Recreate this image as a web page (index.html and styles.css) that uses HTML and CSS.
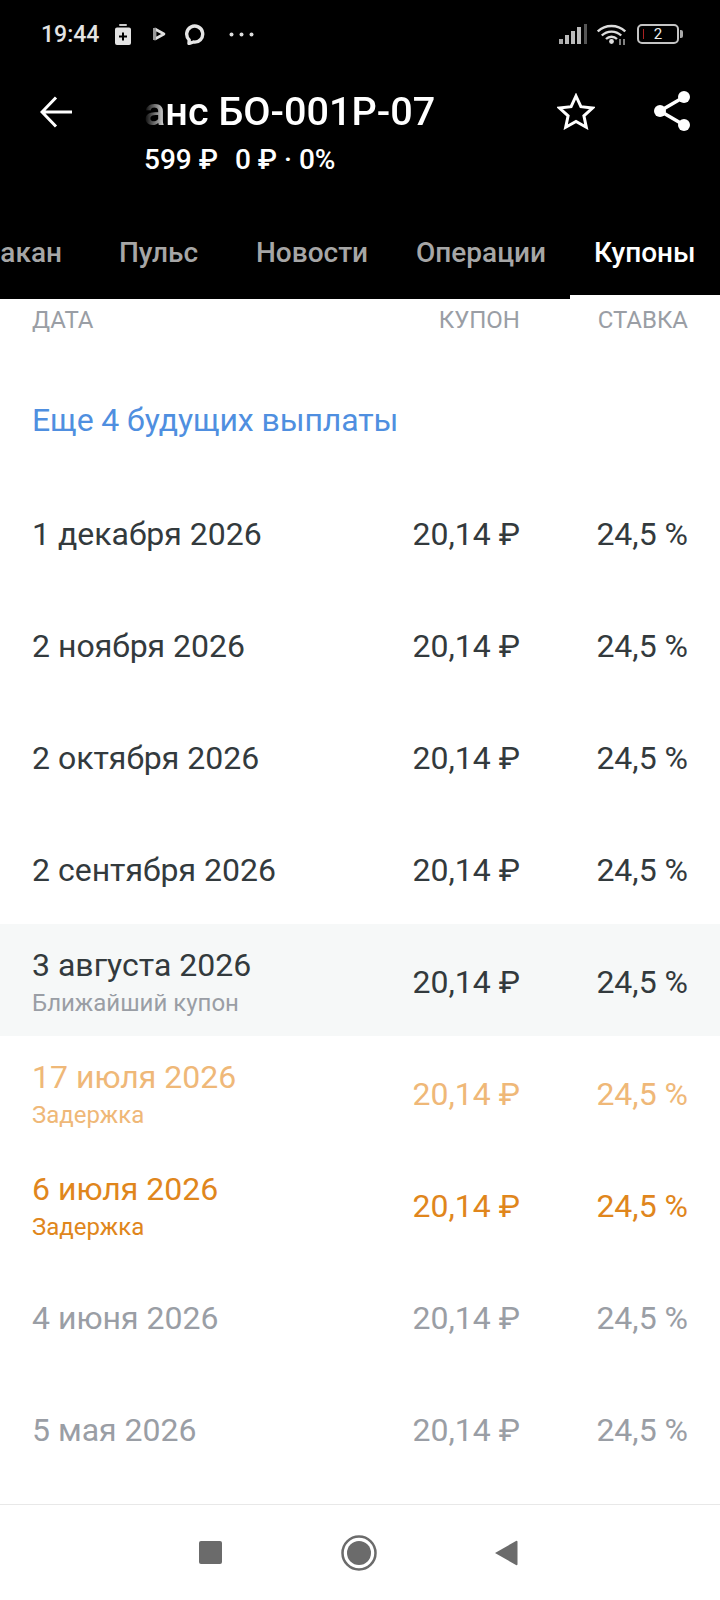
FILE: index.html
```html
<!DOCTYPE html>
<html lang="ru">

<head>
  <meta charset="utf-8" />
  <title>Купоны</title>
  <link rel="stylesheet" href="styles.css">
</head>

<body>
  <div class="screen">
    <header class="top">
      <div class="status">
        <span class="time">19:44</span>
        <svg class="st-clip" width="16" height="21" viewBox="0 0 16 21">
          <rect x="4" y="0" width="8" height="2" rx="1" fill="#ccc" />
          <path d="M2 3.500h12a2 2 0 0 1 2 2V19a2 2 0 0 1-2 2H2a2 2 0 0 1-2-2V5.500a2 2 0 0 1 2-2z" fill="#e4e4e4" />
          <path d="M8 8.500v8M4 12.500h8" stroke="#000" stroke-width="2" />
        </svg>
        <svg class="st-play" width="13" height="14" viewBox="0 0 13 14">
          <path d="M2 2l9 5-9 5z" fill="none" stroke="#e0e0e0" stroke-width="2.600" stroke-linejoin="round" />
          <path d="M1.500 1v12" stroke="#999" stroke-width="3" />
        </svg>
        <svg class="st-chat" width="21" height="21" viewBox="0 0 20 21">
          <path d="M4.500 19.500l.2-3.600A8 8 0 1 1 9 18z" fill="none" stroke="#e6e6e6" stroke-width="3.400" stroke-linejoin="round" />
        </svg>
        <svg class="st-dots" width="25" height="5" viewBox="0 0 25 5">
          <circle cx="2.500" cy="2.500" r="2" fill="#ddd" />
          <circle cx="12.500" cy="2.500" r="2" fill="#ddd" />
          <circle cx="22.500" cy="2.500" r="2" fill="#ddd" />
        </svg>
        <span class="status-gap"></span>
        <svg class="st-signal" width="28" height="20" viewBox="0 0 28 20">
          <rect x="0" y="15" width="4" height="5" fill="#aaa" />
          <rect x="6" y="11" width="4" height="9" fill="#bbb" />
          <rect x="12" y="7" width="4" height="13" fill="#bbb" />
          <rect x="18" y="3" width="4" height="17" fill="#bbb" />
          <rect x="25" y="0" width="3" height="20" fill="#555" />
        </svg>
        <svg class="st-wifi" width="29" height="22" viewBox="0 0 29 22">
          <path d="M.8 8.500a20 20 0 0 1 27.400 0M4.800 12.500a14 14 0 0 1 19.400 0M9 16a8 8 0 0 1 11 0" fill="none" stroke="#ddd" stroke-width="2.400" />
          <circle cx="14.500" cy="18.500" r="2.400" fill="#ddd" />
          <path d="M23 16v6M27 16v6" stroke="#aaa" stroke-width="1.500" />
        </svg>
        <div class="st-battery">
          <div class="bat-body"><i class="bat-level"></i><span>2</span></div>
          <i class="bat-tip"></i>
        </div>
      </div>

      <div class="toolbar">
        <svg class="back" width="32" height="32" viewBox="0 0 32 32">
          <path d="M32 16H3M16 1.500L2 16l14 14.500" fill="none" stroke="#fff" stroke-width="3" />
        </svg>
        <div class="heading">
          <div class="title">анс БО-001Р-07</div>
          <div class="sub">599 ₽<span class="sub-change">0 ₽ · 0%</span></div>
        </div>
        <svg class="star" width="38" height="37" viewBox="0 0 38 37">
          <path d="M19 3l4.900 10.700 11.600 1.300-8.600 7.800 2.400 11.400L19 28.500 8.700 34.200l2.400-11.400L2.500 15l11.600-1.300z" fill="none" stroke="#fff" stroke-width="3" />
        </svg>
        <svg class="share" width="36" height="40" viewBox="0 0 36 40">
          <path d="M30 6L6 20l24 14" fill="none" stroke="#fff" stroke-width="3.500" />
          <circle cx="30" cy="6" r="6" fill="#fff" />
          <circle cx="6" cy="20" r="6" fill="#fff" />
          <circle cx="30" cy="34" r="6" fill="#fff" />
        </svg>
      </div>

      <nav class="tabs">
        <a class="tab tab-cut">акан</a>
        <a class="tab">Пульс</a>
        <a class="tab">Новости</a>
        <a class="tab">Операции</a>
        <a class="tab active">Купоны</a>
      </nav>
    </header>

    <main class="list">
      <div class="row head">
        <span>ДАТА</span>
        <span class="num">КУПОН</span>
        <span class="num">СТАВКА</span>
      </div>

      <div class="row link-row"><a>Еще 4 будущих выплаты</a></div>

      <div class="row">
        <span>1 декабря 2026</span>
        <span class="num">20,14 ₽</span>
        <span class="num">24,5 %</span>
      </div>
      <div class="row">
        <span>2 ноября 2026</span>
        <span class="num">20,14 ₽</span>
        <span class="num">24,5 %</span>
      </div>
      <div class="row">
        <span>2 октября 2026</span>
        <span class="num">20,14 ₽</span>
        <span class="num">24,5 %</span>
      </div>
      <div class="row">
        <span>2 сентября 2026</span>
        <span class="num">20,14 ₽</span>
        <span class="num">24,5 %</span>
      </div>
      <div class="row next">
        <div>
          <div>3 августа 2026</div>
          <div class="note">Ближайший купон</div>
        </div>
        <span class="num">20,14 ₽</span>
        <span class="num">24,5 %</span>
      </div>
      <div class="row delay-faded">
        <div>
          <div>17 июля 2026</div>
          <div class="note">Задержка</div>
        </div>
        <span class="num">20,14 ₽</span>
        <span class="num">24,5 %</span>
      </div>
      <div class="row delay">
        <div>
          <div>6 июля 2026</div>
          <div class="note">Задержка</div>
        </div>
        <span class="num">20,14 ₽</span>
        <span class="num">24,5 %</span>
      </div>
      <div class="row past">
        <span>4 июня 2026</span>
        <span class="num">20,14 ₽</span>
        <span class="num">24,5 %</span>
      </div>
      <div class="row past">
        <span>5 мая 2026</span>
        <span class="num">20,14 ₽</span>
        <span class="num">24,5 %</span>
      </div>
    </main>

    <footer class="navbar">
      <i class="nav-square"></i>
      <svg class="nav-home" width="36" height="36" viewBox="0 0 36 36">
        <circle cx="18" cy="18" r="16.500" fill="none" stroke="#6b6b6b" stroke-width="2.500" />
        <circle cx="18" cy="18" r="12" fill="#6b6b6b" />
      </svg>
      <svg class="nav-back" width="23" height="26" viewBox="0 0 23 26">
        <path d="M0 13L21 1a1 1 0 0 1 1.500 1v22a1 1 0 0 1-1.500 1z" fill="#6b6b6b" />
      </svg>
    </footer>
  </div>
</body>

</html>
```

FILE: styles.css
```css
* {
  box-sizing: border-box;
}

body {
  margin: 0;
  background-color: #fff;
  font-family: Roboto, "Noto Sans", sans-serif;
}

.screen {
  width: 720px;
  height: 1600px;
  display: flex;
  flex-direction: column;
  overflow: hidden;
}

.top {
  background-color: #000;
  height: 299px;
  flex: none;
}

.status {
  height: 68px;
  display: flex;
  align-items: center;
  padding-left: 41px;
  color: #e4e4e4;
}

.time {
  font-size: 23px;
  font-weight: 500;
  width: 74px;
}

.st-clip {
  margin-right: 22px;
}

.st-play {
  margin-right: 18px;
}

.st-chat {
  margin-right: 24px;
}

.status-gap {
  flex: 1;
}

.st-signal {
  margin-right: 10px;
}

.st-wifi {
  margin-right: 11px;
}

.st-battery {
  display: flex;
  align-items: center;
  margin-right: 37px;
}

.bat-body {
  position: relative;
  width: 42px;
  height: 20px;
  border: 2px solid #c4c4c4;
  border-radius: 5px;
  font-size: 15px;
  line-height: 16px;
  text-align: center;
  color: #eee;
}

.bat-level {
  position: absolute;
  left: 4px;
  top: 3px;
  width: 1px;
  height: 10px;
  background-color: #a22;
}

.bat-tip {
  width: 3px;
  height: 8px;
  margin-left: 1px;
  background-color: #aaa;
  border-radius: 0 2px 2px 0;
}

.toolbar {
  height: 112px;
  display: flex;
  align-items: flex-start;
  color: #fff;
}

.back {
  margin: 28px 0 0 40px;
}

.heading {
  margin-left: 72px;
  flex: 1;
}

.title {
  font-size: 39.6px;
  font-weight: 500;
  line-height: 46px;
  margin-top: 21px;
  -webkit-mask-image: linear-gradient(to right, transparent 0, #000 24px);
  mask-image: linear-gradient(to right, transparent 0, #000 24px);
}

.sub {
  font-size: 28px;
  font-weight: 500;
  line-height: 34px;
  margin-top: 8px;
}

.sub-change {
  margin-left: 17px;
}

.star {
  margin: 25px 0 0 0;
}

.share {
  margin: 23px 30px 0 59px;
}

.tabs {
  height: 119px;
  padding-top: 45px;
  display: flex;
  justify-content: flex-end;
  position: relative;
  font-size: 28px;
  font-weight: 500;
  line-height: 40px;
  white-space: nowrap;
}

.tab {
  flex: none;
  min-width: 147px;
  padding: 8px 24px;
  text-align: center;
  color: #a6a6a6;
}

.tab-cut {
  min-width: 0;
  padding-right: 23px;
}

.tab.active {
  color: #fff;
  width: 150px;
  padding-right: 26px;
}

.tab.active::after {
  content: "";
  position: absolute;
  right: 0;
  bottom: 0;
  width: 150px;
  height: 4px;
  background-color: #fff;
}

.list {
  flex: 1;
}

.row {
  height: 112px;
  padding: 4px 32px 0;
  display: grid;
  grid-template-columns: 1fr 130px 167px;
  align-items: center;
  font-size: 32px;
  line-height: 38px;
  color: #333a3d;
}

.row > .num {
  text-align: right;
}

.row > .num:nth-child(2) {
  padding-right: 1px;
}

.head {
  height: 42px;
  padding-top: 0;
  font-size: 24px;
  color: #9a9ea5;
}

.link-row {
  margin-top: 23px;
  padding-top: 0;
  letter-spacing: -0.1px;
  color: #4f8fe0;
  display: flex;
}

.note {
  font-size: 24px;
  line-height: 30px;
  margin-top: 4px;
  color: #9a9ea5;
}

.next {
  background-color: #f6f8f8;
}

.delay {
  color: #e0861c;
}

.delay .note {
  color: #e0861c;
}

.delay-faded {
  color: #efb878;
}

.delay-faded .note {
  color: #efb878;
}

.past {
  color: #9a9ea5;
}

.navbar {
  height: 96px;
  flex: none;
  border-top: 1px solid #e8e8e8;
  margin-top: 20px;
  display: flex;
  align-items: center;
  padding-left: 199px;
}

.nav-square {
  width: 23px;
  height: 23px;
  background-color: #6b6b6b;
  border-radius: 2px;
}

.nav-home {
  margin-left: 119px;
}

.nav-back {
  margin-left: 118px;
}
```
